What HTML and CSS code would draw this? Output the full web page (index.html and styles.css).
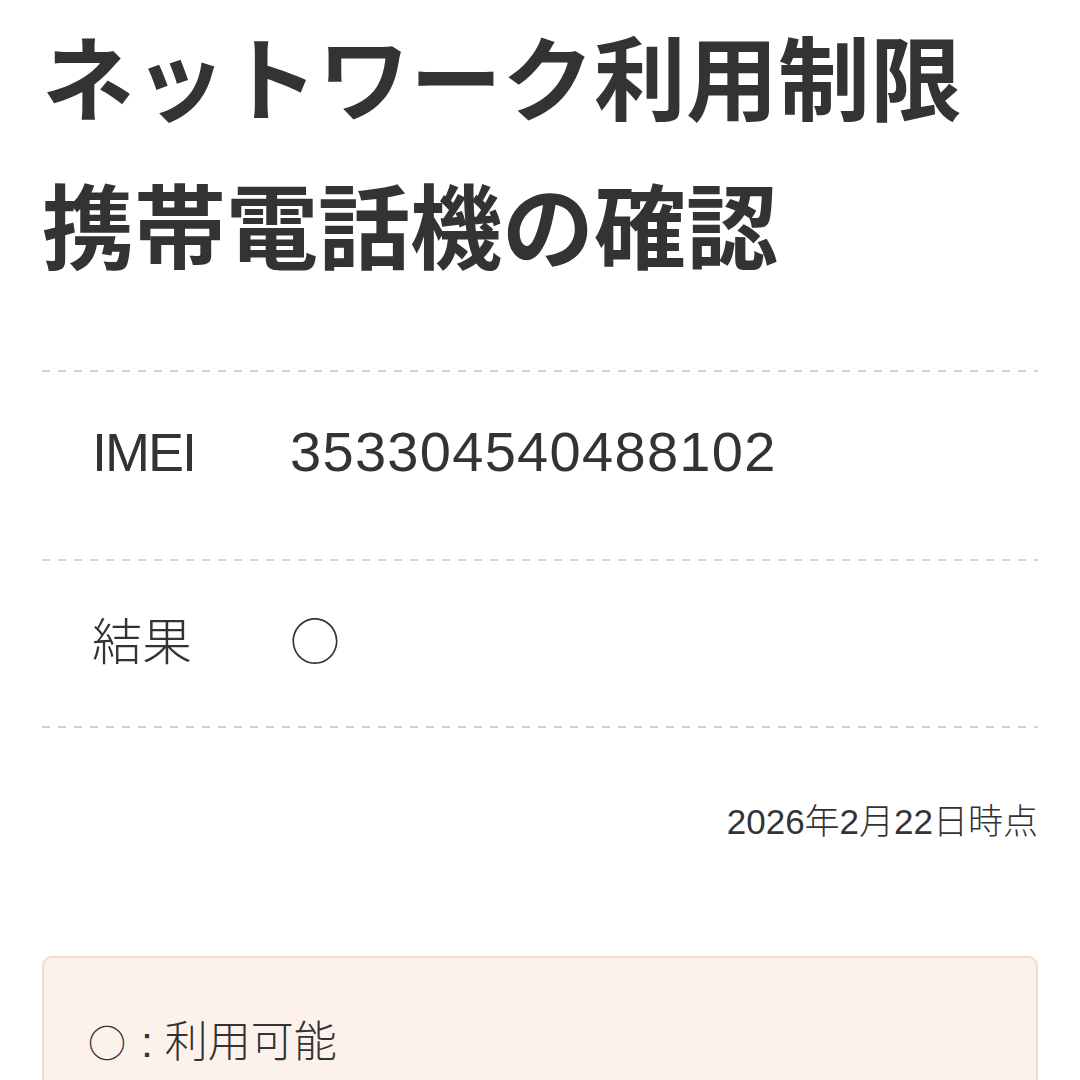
FILE: index.html
```html
<!DOCTYPE html>
<html lang="ja">
<head>
    <meta charset="UTF-8">
    <meta name="viewport" content="width=device-width, initial-scale=1.0">
    <title>ネットワーク利用制限携帯電話機の確認</title>
    <link rel="stylesheet" href="styles.css">
</head>
<body>
    <div class="page">
        <h1 class="title">ネットワーク利用制限<br>携帯電話機の確認</h1>

        <div class="result-table">
            <div class="row row-imei">
                <div class="label label-latin">IMEI</div>
                <div class="value value-number">353304540488102</div>
            </div>
            <div class="row">
                <div class="label">結果</div>
                <div class="value"><span class="mark">○</span></div>
            </div>
        </div>

        <p class="checked-at">2026年2月22日時点</p>

        <div class="legend">
            <p><span class="mark">○</span> : 利用可能</p>
        </div>
    </div>
</body>
</html>
```

FILE: styles.css
```css
body {
    margin: 0;
    background-color: #fff;
    color: #333;
    font-family: "Liberation Sans", "Noto Sans CJK JP", sans-serif;
    font-weight: 300;
}
.page {
    padding: 0 42px;
}
.title {
    margin: 0 0 74px;
    font-family: "Noto Sans CJK JP", sans-serif;
    font-size: 92px;
    font-weight: 700;
    line-height: 148px;
    color: #333;
}
.result-table {
    background: repeating-linear-gradient(to right, #d4d4d4 0 8px, transparent 8px 16px) top / 100% 2px no-repeat;
}
.row {
    display: flex;
    align-items: center;
    padding: 42px 0 45px 50px;
    font-size: 50px;
    line-height: 80px;
    background: repeating-linear-gradient(to right, #d4d4d4 0 8px, transparent 8px 16px) bottom / 100% 2px no-repeat;
}
.row-imei {
    padding-bottom: 69px;
}
.label {
    width: 198px;
    flex-shrink: 0;
}
.label-latin {
    font-size: 54px;
    letter-spacing: -2px;
}
.value-number {
    font-size: 56px;
    letter-spacing: 1.3px;
}
.mark {
    font-family: "Noto Sans CJK JP", sans-serif;
    line-height: 1;
}
.checked-at {
    margin: 70px 0 0;
    text-align: right;
    font-size: 35px;
    line-height: 48px;
}
.legend {
    margin-top: 110px;
    padding: 52px 44px 40px;
    border: 2px solid #f3dccb;
    border-radius: 10px;
    background-color: #fdf2eb;
}
.legend p {
    margin: 0;
    font-size: 43px;
    line-height: 64px;
}
.legend .mark {
    font-size: 38px;
    margin-right: 3px;
}
```
